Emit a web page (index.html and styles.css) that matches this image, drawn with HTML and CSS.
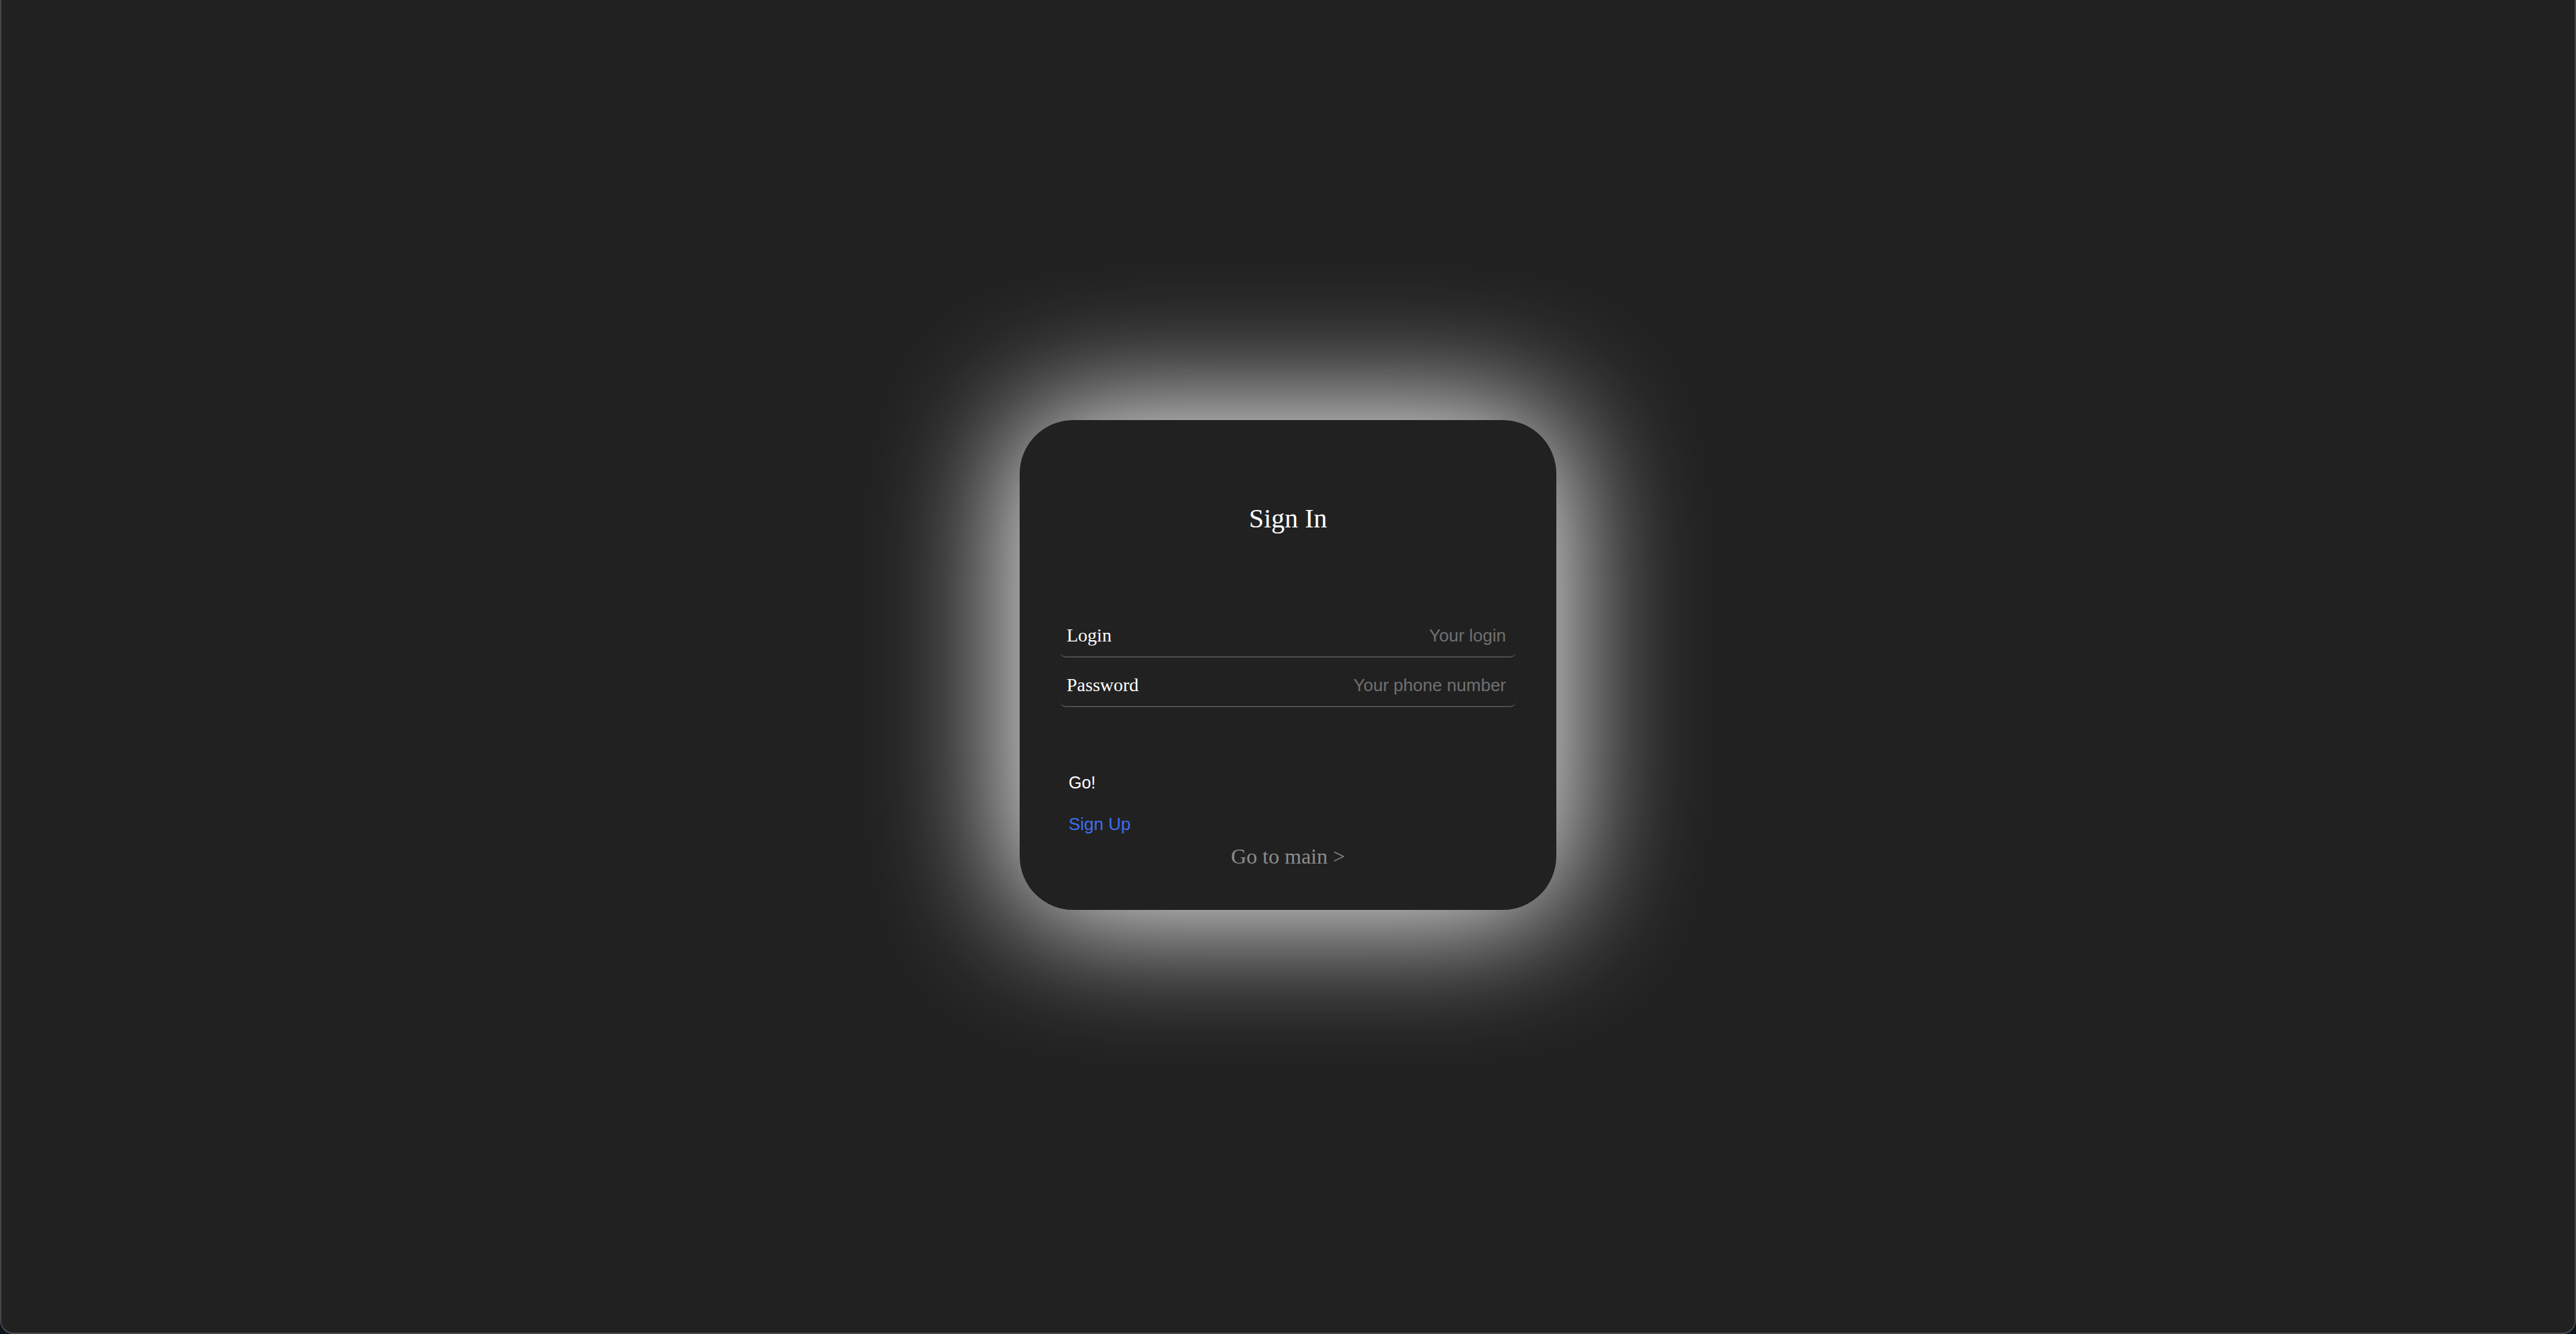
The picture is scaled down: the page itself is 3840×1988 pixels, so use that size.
FILE: index.html
```html
<!DOCTYPE html>
<html lang="en">
<head>
<meta charset="utf-8">
<title>Sign In</title>
<link rel="stylesheet" href="styles.css">
</head>
<body>
<div class="window">
  <form class="card">
    <h2 class="title">Sign In</h2>
    <label class="field">
      <span class="field-label">Login</span>
      <input class="field-input" type="text" placeholder="Your login">
    </label>
    <label class="field">
      <span class="field-label">Password</span>
      <input class="field-input" type="password" placeholder="Your phone number">
    </label>
    <div class="actions">
      <button class="go" type="button">Go!</button>
      <a class="signup" href="#">Sign Up</a>
    </div>
    <a class="to-main" href="#">Go to main &gt;</a>
  </form>
</div>
</body>
</html>
```
FILE: styles.css
```css
html, body {
  margin: 0;
  padding: 0;
  height: 100%;
}

body {
  background: #0c1220;
  overflow: hidden;
}

.window {
  box-sizing: border-box;
  height: 1988px;
  width: 3840px;
  background: #212121;
  border-left: 2px solid #464646;
  border-right: 2px solid #464646;
  border-bottom: 2px solid #4a4a4a;
  border-radius: 0 0 20px 20px;
  padding-bottom: 4px;
  display: flex;
  align-items: center;
  justify-content: center;
  position: relative;
  z-index: 0;
  overflow: hidden;
}

.card {
  box-sizing: border-box;
  position: relative;
  width: 800px;
  height: 730px;
  background: #212121;
  border-radius: 80px;
  padding: 123.5px 60px 0 60px;
  display: flex;
  flex-direction: column;
}

.card::before {
  content: "";
  position: absolute;
  inset: -12px;
  border-radius: 92px;
  background: #ffffff;
  filter: blur(100px);
  z-index: -1;
}

.title {
  margin: 0 0 110.5px 0;
  font-family: "Liberation Serif", "Times New Roman", serif;
  font-weight: normal;
  font-size: 40px;
  line-height: 46px;
  color: #ffffff;
  text-align: center;
}

.field {
  box-sizing: border-box;
  height: 74px;
  display: flex;
  align-items: baseline;
  padding: 25px 15px 0 10px;
  border-bottom: 2px solid #4d4d4d;
  border-radius: 0 0 9px 9px;
}

.field-label {
  font-family: "Liberation Serif", "Times New Roman", serif;
  font-size: 28px;
  line-height: 32px;
  color: #ffffff;
  white-space: nowrap;
}

.field-input {
  flex: 1;
  min-width: 0;
  height: 32px;
  padding: 0;
  margin: 0;
  border: 0;
  outline: none;
  background: transparent;
  font-family: "Liberation Sans", Arial, sans-serif;
  font-size: 26px;
  line-height: 32px;
  color: #ffffff;
  text-align: right;
}

.field-input::placeholder {
  color: #707070;
  opacity: 1;
}

.actions {
  display: flex;
  flex-direction: column;
  align-items: flex-start;
  padding-left: 13px;
  margin-top: 97.3px;
}

.go {
  padding: 0;
  margin: 0;
  border: 0;
  background: transparent;
  font-family: "Liberation Sans", Arial, sans-serif;
  font-size: 25px;
  line-height: 30px;
  color: #ffffff;
  cursor: pointer;
}

.signup {
  margin-top: 31.7px;
  font-family: "Liberation Sans", Arial, sans-serif;
  font-size: 26px;
  line-height: 30px;
  color: #3d6ef0;
  text-decoration: none;
}

.to-main {
  margin-top: 15px;
  align-self: center;
  font-family: "Liberation Serif", "Times New Roman", serif;
  font-size: 32px;
  line-height: 36px;
  color: #8c8c8c;
  text-decoration: none;
}
```
